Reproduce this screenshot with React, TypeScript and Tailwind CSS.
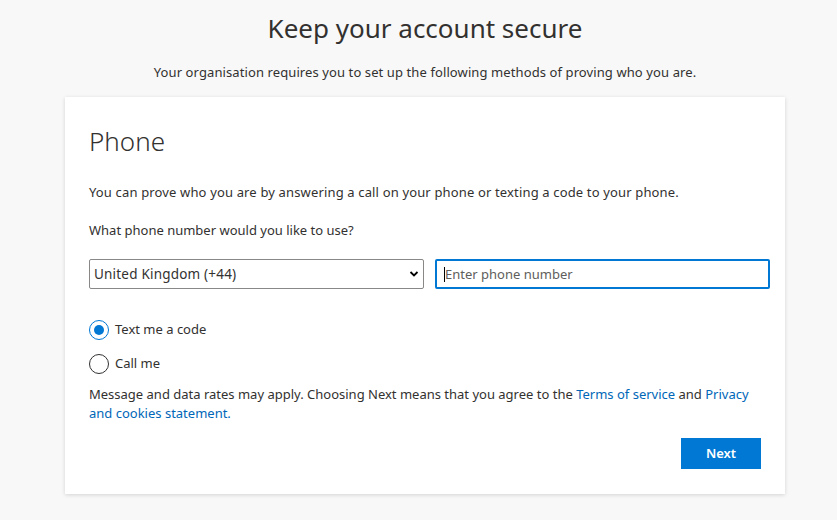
import React from 'react';

const font = { fontFamily: '"Noto Sans", "Open Sans", sans-serif' };

const App: React.FC = () => {
  return (
    <div className="min-h-[520px] w-full bg-[#f8f8f8] text-[#323130]" style={font}>
      <div className="w-[850px] flex flex-col items-center pt-[9px]">
        {/* Page heading */}
        <h1 className="text-[26px] leading-[38px] font-normal text-[#323130]">Keep your account secure</h1>
        <p className="mt-[15px] text-[13px] leading-[20px] tracking-[0.1px]">
          Your organisation requires you to set up the following methods of proving who you are.
        </p>

        {/* Method card */}
        <div className="mt-[15px] w-[720px] bg-white shadow-[0_1px_4px_rgba(0,0,0,0.15)] px-6 pt-[26px] pb-[25px]">
          <h2 className="text-[26px] leading-[36px] font-light">Phone</h2>
          <p className="mt-[23px] text-[13px] leading-[20px] tracking-[0.15px]">
            You can prove who you are by answering a call on your phone or texting a code to your phone.
          </p>
          <p className="mt-[18px] text-[13px] leading-[20px]">What phone number would you like to use?</p>

          <div className="mt-[19px] flex gap-[11px]">
            <div className="relative shrink-0 w-[335px] h-[30px] border border-[#8a8886] rounded-[2px] flex items-center pl-[4px] pt-[1px]">
              <span className="text-[13.5px] tracking-[0.2px]">United Kingdom (+44)</span>
              <svg className="absolute right-[4px] top-[10px]" width="10" height="8" viewBox="0 0 10 8">
                <path d="M1.5 2 L5 5.5 L8.5 2" stroke="#000" strokeWidth="1.8" fill="none" />
              </svg>
            </div>
            <div className="shrink-0 w-[335px] h-[30px] border-2 border-[#0078d4] rounded-[2px] flex items-center pl-[7px] pt-[1px]">
              <span className="w-px h-[15px] bg-black" />
              <span className="text-[13px] text-[#605e5c]">Enter phone number</span>
            </div>
          </div>

          {/* Delivery options */}
          <div className="mt-[31px] flex flex-col gap-[14px]">
            <label className="flex items-center gap-[6px] h-[20px]">
              <span className="w-[20px] h-[20px] rounded-full border border-[#0078d4] flex items-center justify-center">
                <span className="w-[10px] h-[10px] rounded-full bg-[#0078d4]" />
              </span>
              <span className="text-[13px]">Text me a code</span>
            </label>
            <label className="flex items-center gap-[6px] h-[20px]">
              <span className="w-[20px] h-[20px] rounded-full border border-[#323130]" />
              <span className="text-[13px]">Call me</span>
            </label>
          </div>

          <p className="mt-[11px] text-[13px] leading-[19px]">
            Message and data rates may apply. Choosing Next means that you agree to the{' '}
            <a className="text-[#0067b8]">Terms of service</a> and{' '}
            <a className="text-[#0067b8]">Privacy and cookies statement.</a>
          </p>

          <div className="mt-[15px] flex justify-end">
            <button className="w-[80px] h-[31px] bg-[#0078d4] text-white text-[13px] font-semibold">Next</button>
          </div>
        </div>
      </div>
    </div>
  );
};

export default App;
